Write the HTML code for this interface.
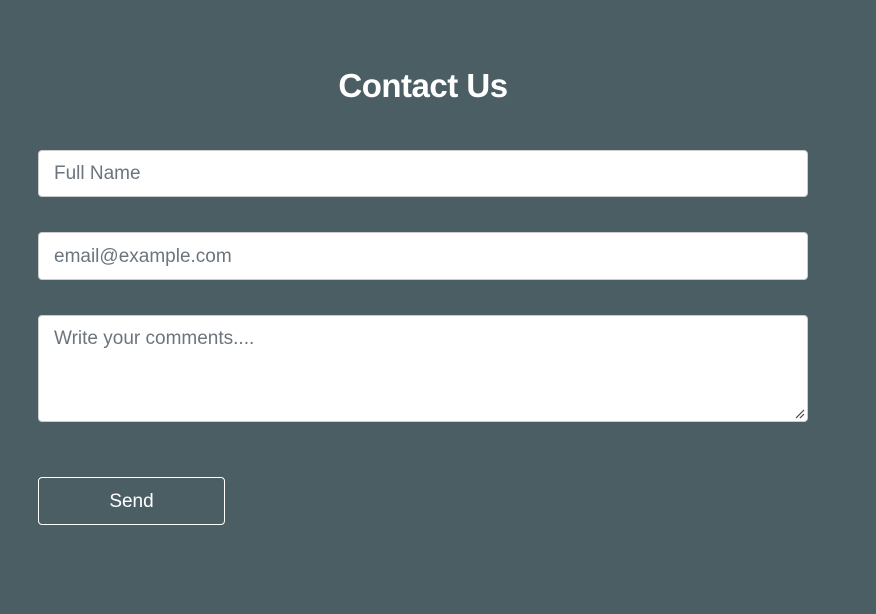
<!DOCTYPE html>
<html><head><style>
body{margin:0;width:876px;height:614px;background:#4b5e64;font-family:"Liberation Sans",sans-serif;position:relative;overflow:hidden}
h1{position:absolute;left:0;width:846px;top:67px;margin:0;text-align:center;color:#fff;font-size:33px;font-weight:bold;letter-spacing:-0.5px}
.f{position:absolute;left:38px;width:770px;background:#fff;border:1px solid #ccc;border-radius:4px;color:#6c757d;font-size:19px;box-sizing:border-box;padding-left:15px}
.btn{position:absolute;left:38px;top:477px;width:187px;height:48px;border:1px solid #fff;border-radius:4px;box-sizing:border-box;color:#fff;font-size:19px;text-align:center;line-height:47px}
</style></head><body>
<h1>Contact Us</h1>
<div class="f" style="top:150px;height:47px;line-height:46px">Full Name</div>
<div class="f" style="top:232px;height:48px;line-height:47px">email@example.com</div>
<div class="f" style="top:315px;height:107px;padding-top:12px">Write your comments....
<svg style="position:absolute;right:2px;bottom:2px" width="10" height="10"><path d="M1 9L9 1M5 9L9 5" stroke="#444" stroke-width="1.2"/></svg></div>
<div class="btn">Send</div>
</body></html>
